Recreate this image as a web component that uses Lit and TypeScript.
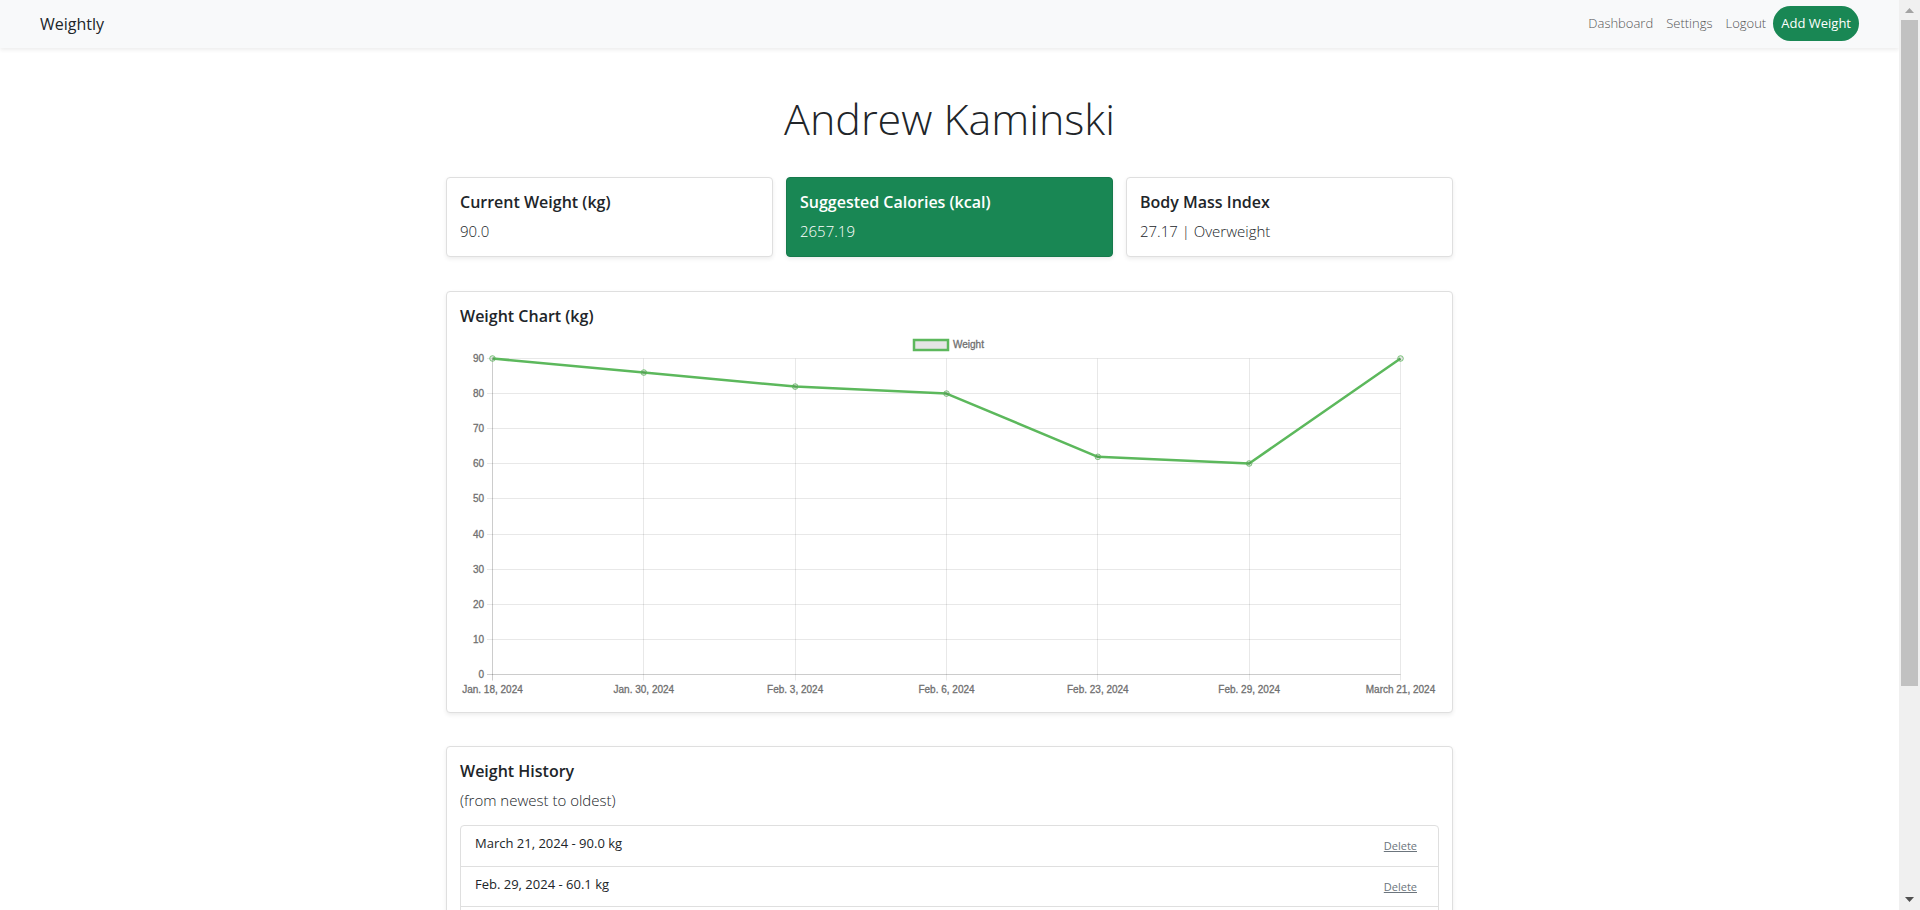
import { LitElement, html, svg, css } from "lit";
import { customElement, property } from "lit/decorators.js";

interface Entry {
  date: string;
  kg: number;
}

const entries: Entry[] = [
  { date: "Jan. 18, 2024", kg: 90 },
  { date: "Jan. 30, 2024", kg: 86 },
  { date: "Feb. 3, 2024", kg: 82 },
  { date: "Feb. 6, 2024", kg: 80 },
  { date: "Feb. 23, 2024", kg: 62 },
  { date: "Feb. 29, 2024", kg: 60.1 },
  { date: "March 21, 2024", kg: 90 },
];

@customElement("weight-chart")
export class WeightChart extends LitElement {
  @property({ attribute: false }) data: Entry[] = [];

  static styles = css`
    :host { display: block; }
    svg { display: block; width: 100%; height: auto; overflow: visible; }
    text { font: 10px "Liberation Sans", Arial, sans-serif; fill: #707070; stroke: #707070; stroke-width: 0.3px; }
    .end { text-anchor: end; }
    .mid { text-anchor: middle; }
    .grid { stroke: rgba(0, 0, 0, 0.09); }
    .axis { stroke: rgba(0, 0, 0, 0.2); }
    .line { fill: none; stroke: #5cb85c; stroke-width: 2.5px; stroke-linejoin: round; }
    .dot { fill: rgba(0, 0, 0, 0.1); stroke: #5cb85c; stroke-opacity: 0.8; }
    .key { fill: #e5e5e5; stroke: #5cb85c; stroke-width: 2.5px; }
  `;

  render() {
    const left = 32.5;
    const right = 940.5;
    const top = 25.5;
    const bottom = 341.5;
    const step = (right - left) / (this.data.length - 1);
    const x = (i: number) => left + i * step;
    const y = (v: number) => bottom - (v / 90) * (bottom - top);
    const gx = (i: number) => Math.floor(x(i)) + 0.5;
    const gy = (v: number) => Math.floor(y(v)) + 0.5;
    const levels = [0, 10, 20, 30, 40, 50, 60, 70, 80, 90];
    return html`
      <svg viewBox="0 0 979 366" role="img" aria-label="Weight over time">
        <rect class="key" x="454" y="7" width="34" height="10"></rect>
        <text x="493" y="15">Weight</text>
        ${levels.map((v) => svg`
          <line class=${v ? "grid" : "axis"} x1="27" x2=${right} y1=${gy(v)} y2=${gy(v)}></line>
          <text class="end" x="24" y=${gy(v) + 3}>${v}</text>`)}
        ${this.data.map((d, i) => svg`
          <line class=${i ? "grid" : "axis"} x1=${gx(i)} x2=${gx(i)} y1=${top} y2=${bottom + 6}></line>
          <text class="mid" x=${x(i)} y="360">${d.date}</text>`)}
        <polyline class="line" points=${this.data.map((d, i) => `${x(i)},${y(d.kg)}`).join(" ")}></polyline>
        ${this.data.map((d, i) => svg`<circle class="dot" cx=${x(i)} cy=${y(d.kg)} r="2.800"></circle>`)}
      </svg>`;
  }
}

@customElement("app-root")
export class AppRoot extends LitElement {
  static styles = css`
    :host {
      display: flex;
      height: 100vh;
      overflow: hidden;
      background: #fff;
      color: #212529;
      font: 13px/20px "Open Sans", "Noto Sans", sans-serif;
    }
    * { box-sizing: border-box; margin: 0; }
    .page { flex: 1; min-width: 0; overflow-y: auto; scrollbar-width: none; }
    .nav {
      display: flex;
      align-items: center;
      justify-content: space-between;
      height: 48px;
      padding: 0 40px;
      background: #f8f9fa;
      box-shadow: 0 2px 4px rgba(0, 0, 0, 0.075);
    }
    .brand { color: #212529; font-size: 16px; text-decoration: none; }
    .links { display: flex; align-items: center; gap: 13px; padding-bottom: 2px; }
    .link { padding-bottom: 1px; color: #555; font-size: 13px; font-weight: 300; text-decoration: none; }
    .add {
      height: 35px;
      margin-left: -6px;
      padding: 0 8px;
      border: 0;
      border-radius: 18px;
      background: #198754;
      color: #fff;
      font: 500 13px/20px "Open Sans", "Noto Sans", sans-serif;
    }
    .main { max-width: 1007px; margin: 0 auto; padding-bottom: 48px; }
    .name { padding: 41px 0 28px; font-size: 43px; font-weight: 300; line-height: 60px; text-align: center; }
    .stats { display: grid; grid-template-columns: repeat(3, 1fr); gap: 13px; }
    .card {
      padding: 13px;
      border: 1px solid #dfdfdf;
      border-radius: 4px;
      background: #fff;
      box-shadow: 0 2px 4px rgba(0, 0, 0, 0.075);
    }
    .accent { border-color: #167a4c; background: #198754; color: #fff; }
    .stats .card { height: 80px; }
    .chart { margin-top: 34px; }
    .history { margin-top: 33px; }
    .title { font-size: 16px; font-weight: 600; line-height: 22px; }
    .text { margin-top: 5px; font-size: 15px; font-weight: 300; line-height: 26px; }
    .plot { margin-top: 6px; }
    .list { margin: 12px 0 0; padding: 0; border: 1px solid #dfdfdf; border-radius: 4px; list-style: none; }
    .row { display: flex; justify-content: space-between; height: 40px; padding: 7px 21px 0 14px; }
    .row + .row { border-top: 1px solid #dfdfdf; }
    .delete {
      height: 26px;
      padding: 0;
      border: 0;
      background: none;
      color: #6c757d;
      font: 11px/26px "Open Sans", "Noto Sans", sans-serif;
      text-decoration: underline;
    }
    .bar {
      display: flex;
      flex-direction: column;
      justify-content: space-between;
      width: 21px;
      background: #f0f0f0;
    }
    .arrow { display: block; width: 21px; height: 20px; }
    .track { flex: 1; padding: 0 2px; }
    .thumb { width: 17px; height: 76.5%; background: #c1c1c1; }
  `;

  render() {
    return html`
      <div class="page">
        <nav class="nav">
          <a class="brand" href="#">Weightly</a>
          <div class="links">
            <a class="link" href="#dashboard">Dashboard</a>
            <a class="link" href="#settings">Settings</a>
            <a class="link" href="#logout">Logout</a>
            <button class="add" type="button">Add Weight</button>
          </div>
        </nav>
        <main class="main">
          <h1 class="name">Andrew Kaminski</h1>
          <section class="stats">
            <article class="card">
              <h2 class="title">Current Weight (kg)</h2>
              <p class="text">90.0</p>
            </article>
            <article class="card accent">
              <h2 class="title">Suggested Calories (kcal)</h2>
              <p class="text">2657.19</p>
            </article>
            <article class="card">
              <h2 class="title">Body Mass Index</h2>
              <p class="text">27.17 | Overweight</p>
            </article>
          </section>
          <section class="card chart">
            <h2 class="title">Weight Chart (kg)</h2>
            <weight-chart class="plot" .data=${entries}></weight-chart>
          </section>
          <section class="card history">
            <h2 class="title">Weight History</h2>
            <p class="text">(from newest to oldest)</p>
            <ul class="list">
              ${[...entries].reverse().map((e) => html`
                <li class="row">
                  <span>${e.date} - ${e.kg.toFixed(1)} kg</span>
                  <button class="delete" type="button">Delete</button>
                </li>`)}
            </ul>
          </section>
        </main>
      </div>
      <div class="bar" aria-hidden="true">
        <svg class="arrow" viewBox="0 0 21 20"><path d="M6 13 10.500 8 15 13z" fill="#a3a3a3"></path></svg>
        <div class="track"><div class="thumb"></div></div>
        <svg class="arrow" viewBox="0 0 21 20"><path d="M6 7 10.500 12 15 7z" fill="#505050"></path></svg>
      </div>`;
  }
}
